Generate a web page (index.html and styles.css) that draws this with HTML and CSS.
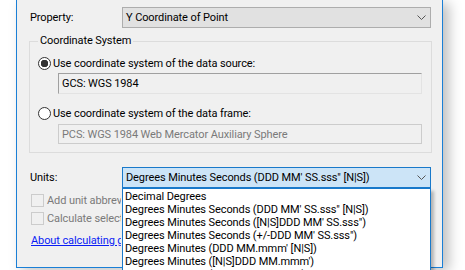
FILE: index.html
```html
<!DOCTYPE html>
<html lang="en">
<head>
    <meta charset="UTF-8">
    <title>Calculate Geometry</title>
    <link rel="stylesheet" href="styles.css">
</head>
<body>
    <div class="window">
        <div class="row">
            <label class="row-label">Property:</label>
            <div class="combo">
                <span>Y Coordinate of Point</span>
                <svg class="chevron" width="9" height="5" viewBox="0 0 9 5"><polyline points="0.5,0.5 4.5,4.5 8.5,0.5" fill="none" stroke="#555" stroke-width="1"/></svg>
            </div>
        </div>
        <fieldset class="group">
            <legend>Coordinate System</legend>
            <div class="option">
                <span class="radio checked"></span>
                <span>Use coordinate system of the data source:</span>
            </div>
            <div class="field">GCS: WGS 1984</div>
            <div class="option second">
                <span class="radio"></span>
                <span>Use coordinate system of the data frame:</span>
            </div>
            <div class="field disabled">PCS: WGS 1984 Web Mercator Auxiliary Sphere</div>
        </fieldset>
        <div class="row units">
            <label class="row-label">Units:</label>
            <div class="combo-wrap">
                <div class="combo open">
                    <span>Degrees Minutes Seconds (DDD MM' SS.sss" [N|S])</span>
                    <svg class="chevron" width="9" height="5" viewBox="0 0 9 5"><polyline points="0.5,0.5 4.5,4.5 8.5,0.5" fill="none" stroke="#555" stroke-width="1"/></svg>
                </div>
                <!-- list is open, it hangs over the options below -->
                <ul class="dropdown">
                    <li>Decimal Degrees</li>
                    <li>Degrees Minutes Seconds (DDD MM' SS.sss" [N|S])</li>
                    <li>Degrees Minutes Seconds ([N|S]DDD MM' SS.sss")</li>
                    <li>Degrees Minutes Seconds (+/-DDD MM' SS.sss")</li>
                    <li>Degrees Minutes (DDD MM.mmm' [N|S])</li>
                    <li>Degrees Minutes ([N|S]DDD MM.mmm')</li>
                    <li>Degrees Minutes (+/-DDD MM.mmm')</li>
                </ul>
            </div>
        </div>
        <div class="check">
            <span class="box"></span>
            <span class="check-text">Add unit abbreviation</span>
        </div>
        <div class="check second">
            <span class="box"></span>
            <span class="check-text">Calculate selected records only</span>
        </div>
        <div class="help-wrap">
            <a class="help" href="#">About calculating geometry</a>
        </div>
    </div>
</body>
</html>
```

FILE: styles.css
```css
* {
    margin: 0;
    padding: 0;
    box-sizing: border-box;
}
body {
    width: 465px;
    height: 270px;
    overflow: hidden;
    background-color: #fff;
    font-family: Roboto, "Liberation Sans", sans-serif;
    font-size: 11px;
    letter-spacing: -0.1px;
    color: #000;
}
.window {
    margin-left: 16px;
    width: 427px;
    height: 268px;
    padding: 7px 10px 0 12px;
    background-color: #f0f0f0;
    border: 1px solid #1a7fd6;
    border-top: none;
    box-shadow: 6px 3px 12px rgba(0, 0, 0, 0.25);
}
.row {
    display: flex;
    align-items: center;
    height: 21px;
}
.row-label {
    width: 93px;
    padding-left: 1px;
}
.combo {
    flex: 1;
    height: 21px;
    margin-right: 1px;
    padding: 0 4px 0 3px;
    display: flex;
    align-items: center;
    justify-content: space-between;
    background-color: #e1e1e1;
    border: 1px solid #adadad;
}
.combo-wrap {
    flex: 1;
    position: relative;
    margin-right: 1px;
}
.combo-wrap .combo {
    margin-right: 0;
}
.combo.open {
    background-color: #cce4f7;
    border-color: #1979ca;
}
.chevron {
    display: block;
}
.dropdown {
    position: absolute;
    top: 100%;
    left: 0;
    right: 0;
    z-index: 2;
    list-style: none;
    padding: 1px 0 4px 2px;
    background-color: #fff;
    border: 1px solid #1979ca;
    box-shadow: 3px 3px 3px rgba(0, 0, 0, 0.25);
}
.dropdown li {
    line-height: 13px;
    white-space: nowrap;
}
.group {
    margin-top: 6px;
    padding: 0 0 8px 0;
    border: 1px solid #dcdcdc;
    min-width: 0;
}
.group legend {
    margin-left: 8px;
    padding: 0 2px;
    line-height: 14px;
}
.option {
    display: flex;
    align-items: center;
    height: 14px;
    margin-top: 8px;
    padding-left: 8px;
}
.option.second {
    margin-top: 12px;
}
.radio {
    width: 13px;
    height: 13px;
    margin-right: 2px;
    border: 1px solid #333;
    border-radius: 50%;
    background-color: #fff;
}
.radio.checked {
    background: radial-gradient(circle, #333 0 3.5px, #fff 4px);
}
.field {
    height: 21px;
    margin: 3px 9px 0 28px;
    padding-left: 3px;
    display: flex;
    align-items: center;
    border: 1px solid;
    border-color: #a0a0a0 #e3e3e3 #e3e3e3 #a0a0a0;
}
.field.disabled {
    height: 20px;
    margin-top: 4px;
    color: #7a7a7a;
    border-color: #cccccc;
}
.units {
    margin-top: 14px;
}
.check {
    display: flex;
    align-items: center;
    width: 92px;
    height: 15px;
    margin-top: 5px;
    padding-left: 2px;
    overflow: hidden;
    color: #7a7a7a;
    white-space: nowrap;
}
.check.second {
    margin-top: 3px;
}
.box {
    flex: none;
    width: 13px;
    height: 13px;
    margin-right: 3px;
    border: 1px solid #cccccc;
}
.help-wrap {
    width: 92px;
    margin-top: 7px;
    padding-left: 2px;
    overflow: hidden;
    white-space: nowrap;
}
.help {
    line-height: 15px;
    color: #0a1cf5;
}
```
